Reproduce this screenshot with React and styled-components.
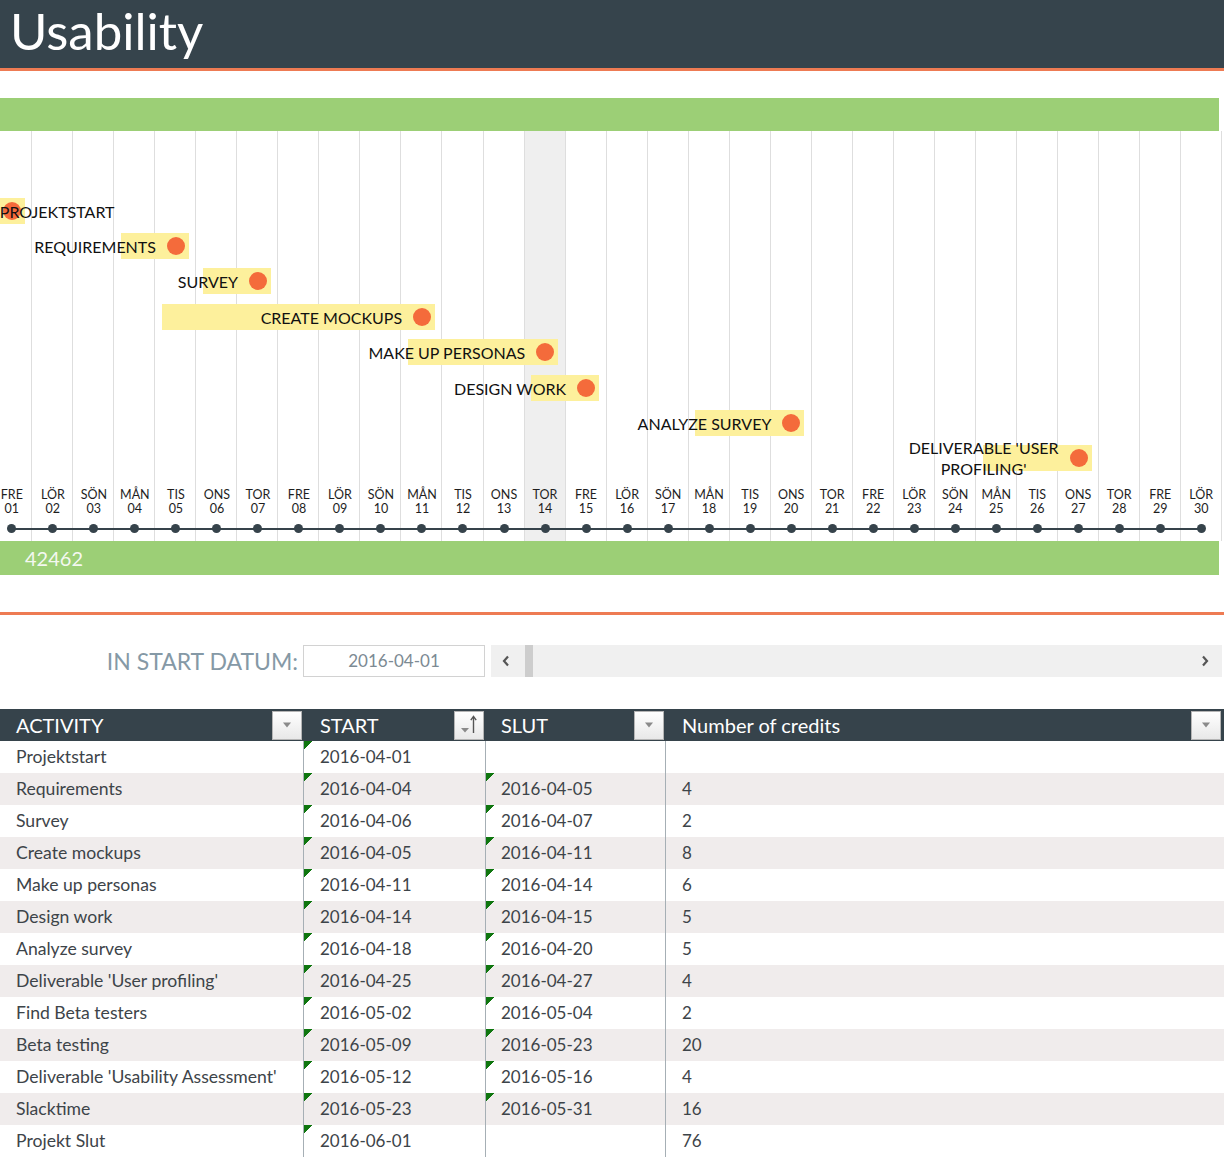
import React from "react";
import styled, { createGlobalStyle } from "styled-components";

const GlobalStyle = createGlobalStyle`
  html, body {
    margin: 0;
    padding: 0;
    background: #fff;
  }
  body {
    font-family: Lato, "Open Sans", sans-serif;
    overflow: hidden;
  }
`;

const COL = 41.03;
const center = (day) => COL * (day - 1) + COL / 2;

const weekdays = ["FRE", "LÖR", "SÖN", "MÅN", "TIS", "ONS", "TOR"];
const days = Array.from({ length: 30 }, (_, i) => ({
  name: weekdays[i % 7],
  num: String(i + 1).padStart(2, "0"),
}));

const milestones = [
  { label: ["PROJEKTSTART"], start: 1, end: 1, atStart: true },
  { label: ["REQUIREMENTS"], start: 4, end: 5 },
  { label: ["SURVEY"], start: 6, end: 7 },
  { label: ["CREATE MOCKUPS"], start: 5, end: 11 },
  { label: ["MAKE UP PERSONAS"], start: 11, end: 14 },
  { label: ["DESIGN WORK"], start: 14, end: 15 },
  { label: ["ANALYZE SURVEY"], start: 18, end: 20 },
  { label: ["DELIVERABLE 'USER", "PROFILING'"], start: 25, end: 27 },
];

const rows = [
  ["Projektstart", "2016-04-01", "", ""],
  ["Requirements", "2016-04-04", "2016-04-05", "4"],
  ["Survey", "2016-04-06", "2016-04-07", "2"],
  ["Create mockups", "2016-04-05", "2016-04-11", "8"],
  ["Make up personas", "2016-04-11", "2016-04-14", "6"],
  ["Design work", "2016-04-14", "2016-04-15", "5"],
  ["Analyze survey", "2016-04-18", "2016-04-20", "5"],
  ["Deliverable 'User profiling'", "2016-04-25", "2016-04-27", "4"],
  ["Find Beta testers", "2016-05-02", "2016-05-04", "2"],
  ["Beta testing", "2016-05-09", "2016-05-23", "20"],
  ["Deliverable 'Usability Assessment'", "2016-05-12", "2016-05-16", "4"],
  ["Slacktime", "2016-05-23", "2016-05-31", "16"],
  ["Projekt Slut", "2016-06-01", "", "76"],
];

/* ---------- header ---------- */

const Page = styled.div`
  width: 1224px;
  display: flex;
  flex-direction: column;
`;

const TitleBar = styled.header`
  height: 68px;
  background: #36444c;
  border-bottom: 3px solid #ee7b53;
  padding-left: 10px;
`;

const Title = styled.h1`
  margin: 0;
  font-family: Lato, sans-serif;
  font-weight: 400;
  font-size: 51px;
  line-height: 61px;
  color: #fff;
`;

/* ---------- timeline ---------- */

const Band = styled.div`
  width: 1219px;
  height: ${(p) => p.$h}px;
  margin-top: ${(p) => p.$top || 0}px;
  background: #9ccf76;
  color: #f4f8f0;
  font-size: 20px;
  line-height: ${(p) => p.$h}px;
  padding-left: 25px;
  box-sizing: border-box;
`;

const ChartClip = styled.div`
  overflow: hidden;
`;

const Chart = styled.div`
  display: grid;
  width: ${COL * 30}px;
  height: 410px;
  margin-left: -8.7px;
  & > * {
    grid-area: 1 / 1;
  }
`;

const Columns = styled.div`
  display: flex;
`;

const Column = styled.div`
  flex: 0 0 ${COL}px;
  box-sizing: border-box;
  border-right: 1px solid #dedede;
  background: ${(p) => (p.$today ? "#efefef" : "transparent")};
`;

const Layer = styled.div`
  display: flex;
  flex-direction: column;
  padding-top: 62px;
`;

const BarRow = styled.div`
  height: 35.4px;
  display: flex;
  align-items: center;
`;

const Bar = styled.div`
  position: relative;
  height: 26px;
  flex: none;
  background: #fdf09c;
  display: flex;
  align-items: center;
  justify-content: flex-end;
  padding-right: 4px;
  box-sizing: border-box;
`;

const Dot = styled.span`
  width: 18px;
  height: 18px;
  border-radius: 50%;
  background: #f46b3b;
  flex: none;
`;

const BarLabel = styled.span`
  position: absolute;
  top: 50%;
  transform: translateY(-50%);
  ${(p) => (p.$atStart ? "left: 2px;" : "right: 33px;")}
  z-index: 1;
  display: flex;
  flex-direction: column;
  align-items: center;
  white-space: nowrap;
  font-size: 16px;
  line-height: 21px;
  color: #111;
`;

const DayRow = styled.div`
  display: flex;
  margin-top: 12px;
`;

const DayCell = styled.div`
  flex: 0 0 ${COL}px;
  text-align: center;
  font-size: 12.5px;
  line-height: 14px;
  color: #1e1e1e;
`;

const DotRow = styled.div`
  display: flex;
  align-items: center;
  height: 25px;
  background: linear-gradient(#36434b, #36434b) center / calc(100% - ${COL}px) 2px no-repeat;
`;

const DotCell = styled.div`
  flex: 0 0 ${COL}px;
  display: flex;
  justify-content: center;
`;

const DayDot = styled.span`
  width: 9px;
  height: 9px;
  border-radius: 50%;
  background: #36434b;
`;

const Rule = styled.div`
  height: 3px;
  margin-top: 37px;
  background: #ee7b53;
`;

/* ---------- start date ---------- */

const StartRow = styled.div`
  display: flex;
  height: 32px;
  margin-top: 30px;
`;

const StartLabel = styled.div`
  width: 298px;
  margin-right: 5px;
  text-align: right;
  font-size: 23px;
  line-height: 32px;
  color: #8599a6;
`;

const DateBox = styled.div`
  width: 182px;
  border: 1px solid #d2d2d2;
  box-sizing: border-box;
  text-align: center;
  font-size: 17px;
  line-height: 30px;
  color: #7c8a93;
`;

const Scroller = styled.div`
  width: 731px;
  margin-left: 6px;
  background: #f0f0f0;
  display: flex;
`;

const ScrollBtn = styled.div`
  width: ${(p) => p.$w}px;
  display: flex;
  align-items: center;
  justify-content: center;
`;

const Thumb = styled.div`
  width: 8px;
  margin-left: 4px;
  background: #cdcdcd;
`;

const Spacer = styled.div`
  flex: 1;
`;

const Chevron = ({ dir }) => (
  <svg width="8" height="12" viewBox="0 0 8 12">
    <polyline
      points={dir === "left" ? "6,1.5 2,6 6,10.5" : "2,1.5 6,6 2,10.5"}
      fill="none"
      stroke="#555"
      strokeWidth="2.2"
    />
  </svg>
);

/* ---------- table ---------- */

const GRID = "303px 182px 180px 557px";

const Table = styled.div`
  margin-top: 32px;
  display: flex;
  flex-direction: column;
`;

const HeadRow = styled.div`
  display: grid;
  grid-template-columns: ${GRID};
  height: 32px;
  background: #36434b;
`;

const HeadCell = styled.div`
  display: flex;
  align-items: center;
  justify-content: space-between;
  padding-left: ${(p) => p.$pad}px;
  color: #fff;
  font-size: 20px;
`;

const FilterBtn = styled.div`
  width: 30px;
  height: 29px;
  margin-right: 1px;
  box-sizing: border-box;
  border: 1px solid #b5b5b5;
  background: linear-gradient(#ffffff, #e8e8e8);
  display: flex;
  align-items: center;
  justify-content: center;
`;

const FilterIcon = () => (
  <svg width="10" height="6" viewBox="0 0 10 6">
    <path d="M1 0.5 H9 L5 5.5 Z" fill="#8a8a8a" />
  </svg>
);

const SortIcon = () => (
  <svg width="20" height="22" viewBox="0 0 20 22">
    <path d="M2 14 H10 L6 18.5 Z" fill="#8a8a8a" />
    <path d="M14.5 19 V3" stroke="#555" strokeWidth="1.4" />
    <path d="M11.8 6.2 L14.5 2.5 L17.2 6.2" fill="none" stroke="#555" strokeWidth="1.4" />
  </svg>
);

const BodyRow = styled.div`
  display: grid;
  grid-template-columns: ${GRID};
  height: 32px;
  background: ${(p) => (p.$alt ? "#f0ecec" : "#fff")};
`;

const Cell = styled.div`
  padding-left: ${(p) => p.$pad}px;
  ${(p) => (p.$divider ? "border-left: 1px solid #a6afb5;" : "")}
  font-size: ${(p) => (p.$text ? 17.6 : 17)}px;
  line-height: 32px;
  color: #3d4449;
  white-space: nowrap;
  ${(p) =>
    p.$flag
      ? "background: linear-gradient(135deg, #0f760f 0 6.3px, transparent 6.3px) 0 0 / 10px 10px no-repeat;"
      : ""}
`;

export default function App() {
  return (
    <Page>
      <GlobalStyle />
      <TitleBar>
        <Title>Usability</Title>
      </TitleBar>

      <Band $h={33} $top={27} />
      <ChartClip>
        <Chart>
          <Columns>
            {days.map((d, i) => (
              <Column key={d.num} $today={i === 13} />
            ))}
          </Columns>
          <Layer>
            {milestones.map((m) => (
              <BarRow key={m.label.join(" ")}>
                <Bar
                  style={{
                    marginLeft: center(m.start) - 14,
                    width: center(m.end) - center(m.start) + 27,
                  }}
                >
                  <BarLabel $atStart={m.atStart}>
                    {m.label.map((line) => (
                      <span key={line}>{line}</span>
                    ))}
                  </BarLabel>
                  <Dot />
                </Bar>
              </BarRow>
            ))}
            <DayRow>
              {days.map((d) => (
                <DayCell key={d.num}>
                  {d.name}
                  <br />
                  {d.num}
                </DayCell>
              ))}
            </DayRow>
            <DotRow>
              {days.map((d) => (
                <DotCell key={d.num}>
                  <DayDot />
                </DotCell>
              ))}
            </DotRow>
          </Layer>
        </Chart>
      </ChartClip>
      <Band $h={34}>42462</Band>
      <Rule />

      <StartRow>
        <StartLabel>IN START DATUM:</StartLabel>
        <DateBox>2016-04-01</DateBox>
        <Scroller>
          <ScrollBtn $w={30}>
            <Chevron dir="left" />
          </ScrollBtn>
          <Thumb />
          <Spacer />
          <ScrollBtn $w={34}>
            <Chevron dir="right" />
          </ScrollBtn>
        </Scroller>
      </StartRow>

      <Table>
        <HeadRow>
          <HeadCell $pad={16}>
            ACTIVITY
            <FilterBtn>
              <FilterIcon />
            </FilterBtn>
          </HeadCell>
          <HeadCell $pad={17}>
            START
            <FilterBtn>
              <SortIcon />
            </FilterBtn>
          </HeadCell>
          <HeadCell $pad={16}>
            SLUT
            <FilterBtn>
              <FilterIcon />
            </FilterBtn>
          </HeadCell>
          <HeadCell $pad={17}>
            Number of credits
            <FilterBtn>
              <FilterIcon />
            </FilterBtn>
          </HeadCell>
        </HeadRow>
        {rows.map(([name, start, end, credits], i) => (
          <BodyRow key={name} $alt={i % 2 === 1}>
            <Cell $pad={16} $text>
              {name}
            </Cell>
            <Cell $pad={16} $divider $flag={!!start}>
              {start}
            </Cell>
            <Cell $pad={15} $divider $flag={!!end}>
              {end}
            </Cell>
            <Cell $pad={16} $divider>
              {credits}
            </Cell>
          </BodyRow>
        ))}
      </Table>
    </Page>
  );
}
